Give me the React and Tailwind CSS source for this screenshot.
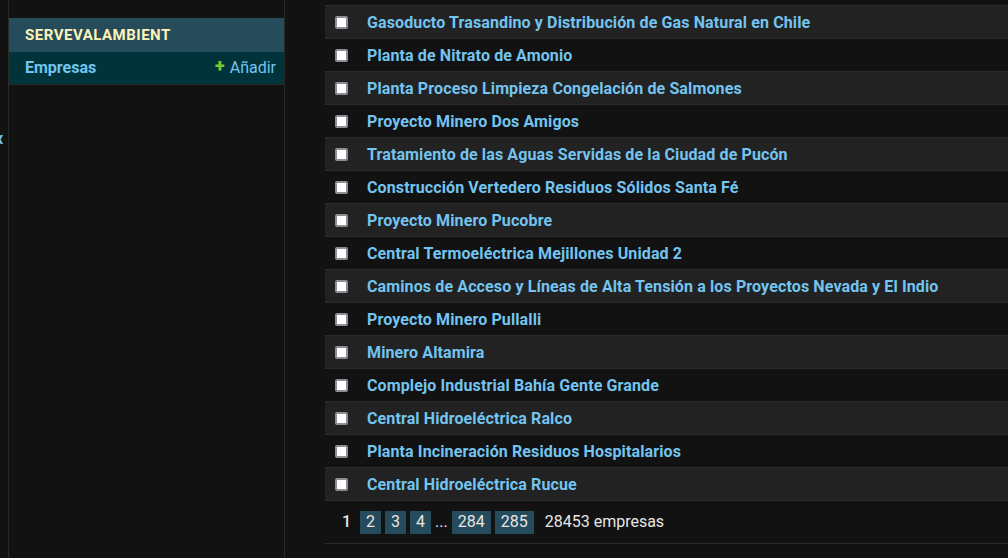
import React from 'react';

const ROWS = [
  'Gasoducto Trasandino y Distribución de Gas Natural en Chile',
  'Planta de Nitrato de Amonio',
  'Planta Proceso Limpieza Congelación de Salmones',
  'Proyecto Minero Dos Amigos',
  'Tratamiento de las Aguas Servidas de la Ciudad de Pucón',
  'Construcción Vertedero Residuos Sólidos Santa Fé',
  'Proyecto Minero Pucobre',
  'Central Termoeléctrica Mejillones Unidad 2',
  'Caminos de Acceso y Líneas de Alta Tensión a los Proyectos Nevada y El Indio',
  'Proyecto Minero Pullalli',
  'Minero Altamira',
  'Complejo Industrial Bahía Gente Grande',
  'Central Hidroeléctrica Ralco',
  'Planta Incineración Residuos Hospitalarios',
  'Central Hidroeléctrica Rucue',
];

const Check = () => (
  <div className="w-[13px] h-[13px] shrink-0 rounded-[2px] bg-white border-2 border-[#8e8c94]" />
);

const Row = ({ name, odd }) => (
  <div className={`h-[33px] flex items-center pl-[10px] border-t border-[#2b2b2b] ${odd ? 'bg-[#222222]' : 'bg-[#121212]'}`}>
    <Check />
    <span className="ml-[19px] mt-[1px] text-[16px] font-bold tracking-[0.12px] text-[#73c4f0] whitespace-nowrap">{name}</span>
  </div>
);

const Page = ({ n }) => (
  <span className="h-[23px] px-[6px] flex items-center bg-[#264b5c] text-[#e6e6e6]">{n}</span>
);

export default function App() {
  return (
    <div className="w-[1008px] h-[558px] overflow-hidden bg-[#121212] flex" style={{ fontFamily: 'Roboto, "Liberation Sans", sans-serif' }}>
      {/* left rail */}
      <div className="w-[9px] shrink-0 border-r border-[#2a2a2a] relative">
        <span className="absolute left-[-5px] top-[127px] text-[16px] font-bold text-[#73c4f0]">x</span>
      </div>

      {/* sidebar */}
      <div className="w-[276px] shrink-0 border-r border-[#2a2a2a] pt-[18px]">
        <div className="h-[34px] flex items-center pl-[16px] bg-[#264b5b] text-[15px] font-bold tracking-[0.5px] text-[#fdf3b8]">
          SERVEVALAMBIENT
        </div>
        <div className="h-[33px] flex items-center justify-between pl-[16px] pr-[8px] bg-[#01343a] border-b border-[#2a2a2a]">
          <span className="text-[16px] font-bold text-[#73c4f0]">Empresas</span>
          <span className="flex items-center text-[16px] text-[#73c4f0]">
            <span className="text-[#7cc734] font-black text-[18px] leading-none mr-[5px] -mt-[5px]">+</span>
            Añadir
          </span>
        </div>
      </div>

      {/* main list */}
      <div className="flex-1 pl-[40px] pt-[5px]">
        {ROWS.map((r, i) => (
          <Row key={r} name={r} odd={i % 2 === 0} />
        ))}
        <div className="border-t border-[#2b2b2b] border-b h-[44px] flex items-center gap-[4px] pl-[17px] text-[16px] text-[#e6e6e6]">
          <span className="mr-[5px] font-medium">1</span>
          <Page n="2" />
          <Page n="3" />
          <Page n="4" />
          <span>...</span>
          <Page n="284" />
          <Page n="285" />
          <span className="ml-[7px]">28453 empresas</span>
        </div>
      </div>
    </div>
  );
}
